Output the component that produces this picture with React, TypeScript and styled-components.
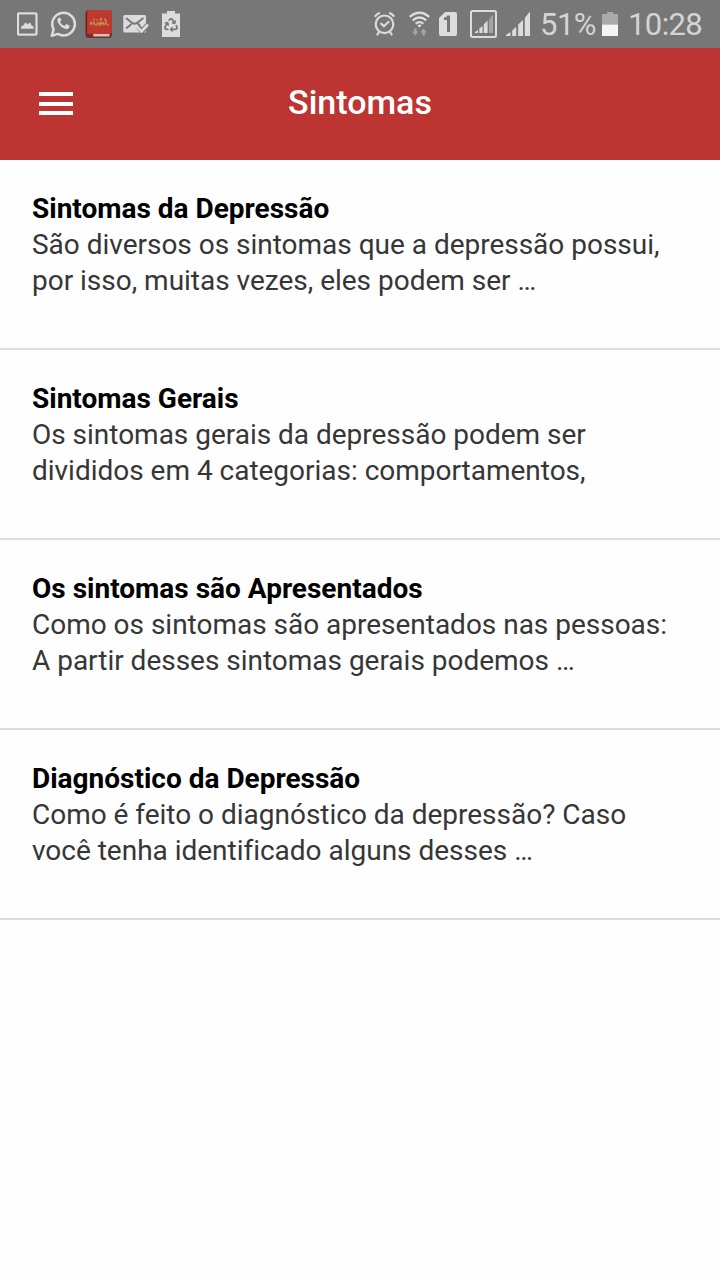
import React from 'react';
import styled, { createGlobalStyle } from 'styled-components';
import { FaRecycle } from 'react-icons/fa';

const GlobalStyle = createGlobalStyle`
  * { box-sizing: border-box; }
  body { margin: 0; background: #fefefe; font-family: Roboto, "Liberation Sans", sans-serif; }
`;

const Screen = styled.div`
  width: 720px;
  min-height: 1280px;
  background: #fefefe;
`;

const StatusBar = styled.div`
  display: flex;
  justify-content: space-between;
  height: 48px;
  padding: 0 17px;
  background: #777777;
  color: #d4d4d4;
`;

const StatusGroup = styled.div`
  display: flex;
  align-items: flex-start;
`;

const StatusIcon = styled.svg<{ $w: number; $before?: number }>`
  display: block;
  flex: none;
  width: ${(p) => p.$w}px;
  height: 48px;
  margin-left: ${(p) => p.$before ?? 0}px;
`;

const StatusText = styled.span<{ $w: number; $before: number; $spacing: number }>`
  width: ${(p) => p.$w}px;
  margin-left: ${(p) => p.$before}px;
  font-size: 31px;
  letter-spacing: ${(p) => p.$spacing}px;
  line-height: 50px;
  white-space: nowrap;
`;

const AppBar = styled.header`
  display: grid;
  grid-template-columns: 112px 1fr 112px;
  align-items: center;
  height: 112px;
  background: #bc3533;
`;

const MenuButton = styled.button`
  display: flex;
  flex-direction: column;
  justify-content: space-between;
  width: 34px;
  height: 23px;
  margin: -1px 0 0 39px;
  padding: 0;
  border: 0;
  background: none;
`;

const MenuLine = styled.span`
  height: 4px;
  background: #ffffff;
`;

const PageTitle = styled.h1`
  margin: -4px 0 0;
  color: #ffffff;
  font-size: 34px;
  font-weight: 500;
  line-height: 40px;
  text-align: center;
`;

const List = styled.ul`
  margin: 0;
  padding: 0;
  list-style: none;
`;

const ListItem = styled.li`
  height: 190px;
  padding: 31px 32px 0;
  border-bottom: 2px solid #dddddd;
`;

const ItemTitle = styled.h2`
  margin: 0;
  color: #000000;
  font-size: 28px;
  font-weight: 700;
  line-height: 36px;
  white-space: nowrap;
`;

const ItemText = styled.p`
  margin: 0;
  color: #363636;
  font-size: 28px;
  letter-spacing: -0.015px;
  line-height: 36px;
  white-space: pre;
`;

const items = [
  { title: 'Sintomas da Depressão', text: 'São diversos os sintomas que a depressão possui,\npor isso, muitas vezes, eles podem ser …' },
  { title: 'Sintomas Gerais', text: 'Os sintomas gerais da depressão podem ser\ndivididos em 4 categorias: comportamentos,' },
  { title: 'Os sintomas são Apresentados', text: 'Como os sintomas são apresentados nas pessoas:\nA partir desses sintomas gerais podemos …' },
  { title: 'Diagnóstico da Depressão', text: 'Como é feito o diagnóstico da depressão? Caso\nvocê tenha identificado alguns desses …' },
];

const ImageIcon = () => (
  <StatusIcon $w={21} viewBox="0 0 21 48">
    <rect x="1" y="13.3" width="18.5" height="21.4" rx="1" fill="none" stroke="#dcdcdc" strokeWidth="2.2" />
    <path d="M4 28.7v-2.2l2.3-1 1.8-2.7h1l1.6 1.6 1.7-1.6h1l1.2 2.6 2 1v2.3z" fill="#dcdcdc" />
  </StatusIcon>
);

const WhatsAppIcon = () => (
  <StatusIcon $w={27} $before={12} viewBox="0 0 27 48">
    <path d="M1.8 35.7l1.8-6.3A11.3 11.3 0 1 1 8 33.9z" fill="none" stroke="#dcdcdc" strokeWidth="2.5" strokeLinejoin="round" />
    <path d="M9.2 17.6c-1.5.7-2.2 2.1-1.7 3.9 1.3 3.7 4.4 6.6 8.3 7.6 1.7.3 3.2-.6 3.7-2.3l.1-1-3.3-1.7-1.8 1.8c-2-.8-3.5-2.2-4.4-4l1.3-1.8-1.4-2.5z" fill="#dcdcdc" />
  </StatusIcon>
);

const BookIcon = () => (
  <StatusIcon $w={28} $before={8} viewBox="0 0 28 48">
    <rect x="0.5" y="10" width="26.5" height="28" rx="3.5" fill="#7c2a26" />
    <path d="M8 34h16.5v2.5H8.5z" fill="#cfc4c0" />
    <path d="M4 10h20a3 3 0 0 1 3 3v18a3 3 0 0 1-3 3H2V12a2 2 0 0 1 2-2z" fill="#bd392f" />
    <path d="M1.5 12v22" stroke="#6c2222" strokeWidth="1.3" />
    <path d="M8 20.5l1.5-2M11 20h2M15 20.5l1-2 1 1M20 18v2.5h2" fill="none" stroke="#cd9254" strokeWidth="1.2" />
    <path d="M5 25l1-3 1.5 2.5L9 22l1 3h2v-2h2v2l2-3v3l2-2.5 1 2.5 2-3 1 3h2" fill="none" stroke="#cd9254" strokeWidth="1.1" />
  </StatusIcon>
);

const MailIcon = () => (
  <StatusIcon $w={26} $before={10} viewBox="0 0 26 48">
    <rect x="0.3" y="15" width="22.7" height="17.5" rx="1.5" fill="#dcdcdc" />
    <path d="M3 18l6.5 5.2q2 1.2 4 0L20.5 18M3 28.5l5.5-4.5M14 23l3 2.5" fill="none" stroke="#777777" strokeWidth="2" />
    <path d="M15 27l4 4 7-7.5" fill="none" stroke="#777777" strokeWidth="5" />
    <path d="M14.2 27.2l4.4 4 6.4-6.7" fill="none" stroke="#dcdcdc" strokeWidth="2.8" />
  </StatusIcon>
);

const RecycleIcon = () => (
  <StatusIcon $w={18} $before={13} viewBox="0 0 18 48">
    <path d="M5 11h8v2.5h5V37H0V13.5h5z" fill="#dcdcdc" />
    <FaRecycle x={2} y={18} size={14} color="#777777" />
  </StatusIcon>
);

const AlarmIcon = () => (
  <StatusIcon $w={22} viewBox="0 0 22 48">
    <g fill="none" stroke="#dcdcdc" strokeWidth="2.2">
      <circle cx="10.5" cy="24.3" r="8.8" />
      <path d="M.8 16.7q1.8-2.8 5-4M20.2 16.7q-1.8-2.8-5-4M5 32l-2 3.3M16 32l2 3.3" />
      <path d="M6.6 23l3.3 3.2 5.3-5" />
    </g>
  </StatusIcon>
);

const WifiIcon = () => (
  <StatusIcon $w={21} $before={13} viewBox="0 0 21 48">
    <g fill="none" stroke="#dcdcdc" strokeWidth="2.3">
      <path d="M.7 16.9q9.8-8.2 19.6 0M3.7 20.3q6.8-5.5 13.6 0M6.6 23.6q3.9-3 7.8 0" />
    </g>
    <path d="M8.3 25.2q2.2-1.4 4.4 0l-2.2 2.5z" fill="#dcdcdc" />
    <path d="M5 28.5h2.6v3H9.5l-3.2 4-3.2-4H5zM13.3 35.5h2.6v-3h1.9l-3.2-4-3.2 4h1.9z" fill="#a5a5a5" />
  </StatusIcon>
);

const SimIcon = () => (
  <StatusIcon $w={18} $before={9} viewBox="0 0 18 48">
    <path d="M6 12h10a2 2 0 0 1 2 2v20a2 2 0 0 1-2 2H2a2 2 0 0 1-2-2V18z" fill="#dcdcdc" />
    <path d="M5 20v-2.4q2.7-.3 3.4-2.2H11V32H8V20z" fill="#777777" />
  </StatusIcon>
);

const BoxedSignalIcon = () => (
  <StatusIcon $w={27} $before={13} viewBox="0 0 27 48">
    <rect x="1" y="11" width="25" height="26" rx="1.5" fill="none" stroke="#dcdcdc" strokeWidth="2" />
    <path d="M5 33v-1l3-2v3zM9.3 33v-4.5l3.3-2.6V33zM13.8 33v-8.8l3.8-3.7V33z" fill="#dcdcdc" />
    <path d="M19 33V19.2l4-4.5V33z" fill="#a3a3a3" />
  </StatusIcon>
);

const SignalIcon = () => (
  <StatusIcon $w={25} $before={9} viewBox="0 0 25 48">
    <path d="M0 36v-1l4.5-3v4zM6.2 36v-5.5l4-3.8V36zM12.2 36V24.5l4.8-4.5V36zM18.8 36V18l5.2-6.5V36z" fill="#dcdcdc" />
  </StatusIcon>
);

const BatteryIcon = () => (
  <StatusIcon $w={16} $before={6} viewBox="0 0 16 48">
    <path d="M5 12h6v2h5v10.5H0V14h5z" fill="#aaaaaa" />
    <path d="M0 24.5h16V36H0z" fill="#f5f5f5" />
  </StatusIcon>
);

export default function App() {
  return (
    <Screen>
      <GlobalStyle />
      <StatusBar>
        <StatusGroup>
          <ImageIcon />
          <WhatsAppIcon />
          <BookIcon />
          <MailIcon />
          <RecycleIcon />
        </StatusGroup>
        <StatusGroup>
          <AlarmIcon />
          <WifiIcon />
          <SimIcon />
          <BoxedSignalIcon />
          <SignalIcon />
          <StatusText $w={56} $before={9} $spacing={-0.5}>51%</StatusText>
          <BatteryIcon />
          <StatusText $w={75} $before={10} $spacing={-0.6}>10:28</StatusText>
        </StatusGroup>
      </StatusBar>
      <AppBar>
        <MenuButton aria-label="Menu">
          <MenuLine />
          <MenuLine />
          <MenuLine />
        </MenuButton>
        <PageTitle>Sintomas</PageTitle>
      </AppBar>
      <List>
        {items.map((item) => (
          <ListItem key={item.title}>
            <ItemTitle>{item.title}</ItemTitle>
            <ItemText>{item.text}</ItemText>
          </ListItem>
        ))}
      </List>
    </Screen>
  );
}
